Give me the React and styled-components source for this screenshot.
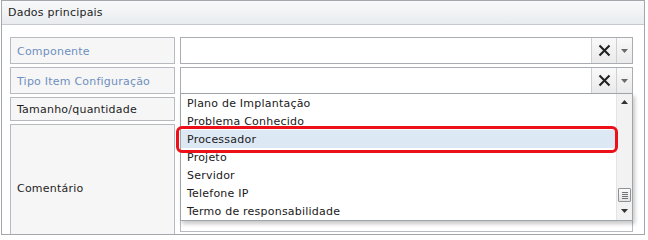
import React from 'react';
import styled, { createGlobalStyle } from 'styled-components';

const GlobalStyle = createGlobalStyle`
  body {
    margin: 0;
    background: #fff;
    font-family: "DejaVu Sans", Verdana, sans-serif;
    letter-spacing: 0.22px;
  }
`;

const Panel = styled.div`
  box-sizing: border-box;
  width: 644px;
  height: 235px;
  margin-left: 1px;
  border: 1px solid #a3a7ac;
  overflow: hidden;
  background: #fff;
`;

const Header = styled.div`
  height: 23px;
  line-height: 24px;
  padding-left: 6px;
  border-bottom: 1px solid #c6cace;
  background: linear-gradient(#f8f9fa, #e9ecef);
  font-size: 11px;
  color: #1e1e1e;
`;

const Body = styled.div`
  padding: 12px 11px 0 8px;
`;

const Form = styled.div`
  display: grid;
  grid-template-columns: 165px 453px;
  grid-template-rows: 27px 27px 24px 128px;
  column-gap: 5px;
  row-gap: 3px;
`;

const Label = styled.div`
  box-sizing: border-box;
  display: flex;
  align-items: center;
  padding: 1px 0 0 6px;
  border: 1px solid #b7bbbf;
  background: #f6f6f6;
  font-size: 11px;
  color: ${p => (p.$hint ? '#6e8fc0' : '#1e1e1e')};
`;

const Combo = styled.div`
  position: relative;
  box-sizing: border-box;
  display: flex;
  border: 1px solid #a9adb2;
  background: #fff;
`;

const Field = styled.div`
  flex: 1;
`;

const SideButton = styled.div`
  width: ${p => p.$w}px;
  display: flex;
  align-items: center;
  justify-content: center;
  border-left: 1px solid #cdd0d3;
  background: linear-gradient(#f9f9f9, #eaeaea);
`;

const Plain = styled.div`
  box-sizing: border-box;
  border: 1px solid #b7bbbf;
  background: #fff;
  height: ${p => p.$h}px;
`;

const List = styled.div`
  position: absolute;
  left: -1px;
  top: 25px;
  z-index: 2;
  box-sizing: border-box;
  width: 453px;
  display: flex;
  border: 1px solid #a0a5aa;
  background: #fff;
  box-shadow: 2px 3px 4px rgba(0, 0, 0, 0.22);
`;

const Items = styled.div`
  flex: 1;
`;

const Item = styled.div`
  height: 17px;
  padding: 1px 0 0 6px;
  line-height: 18px;
  font-size: 11px;
  color: #202020;
  white-space: nowrap;
  background: ${p => (p.$selected ? '#dde8f5' : 'transparent')};
`;

const Scrollbar = styled.div`
  width: 15px;
  display: flex;
  flex-direction: column;
  border-left: 1px solid #e4e4e4;
  background: #f2f2f2;
`;

const ScrollArrow = styled.div`
  height: ${p => p.$h}px;
  display: flex;
  align-items: center;
  justify-content: center;
`;

const Track = styled.div`
  flex: 1;
  display: flex;
  align-items: flex-end;
  justify-content: center;
`;

const Thumb = styled.div`
  box-sizing: border-box;
  width: 13px;
  height: 14px;
  border: 1px solid #8f9296;
  border-radius: 1px;
  background:
    linear-gradient(#6f7378, #6f7378) 3px 3px / 6px 1px no-repeat,
    linear-gradient(#6f7378, #6f7378) 3px 5px / 6px 1px no-repeat,
    linear-gradient(#6f7378, #6f7378) 3px 7px / 6px 1px no-repeat,
    linear-gradient(#6f7378, #6f7378) 3px 9px / 6px 1px no-repeat,
    linear-gradient(#fbfbfb, #e3e3e3);
`;

const Mark = styled.div`
  position: absolute;
  left: -5px;
  top: 32px;
  box-sizing: border-box;
  width: 442px;
  height: 27px;
  border: 3px solid #ec1119;
  border-radius: 6px;
  pointer-events: none;
`;

const ClearIcon = () => (
  <svg width="13" height="13" viewBox="0 0 13 13">
    <path d="M1.5 1.5 L11.5 11.5 M11.5 1.5 L1.5 11.5" stroke="#222" strokeWidth="2.1" />
  </svg>
);

const Caret = ({ up, color = '#6a6a6a' }) => (
  <svg width="7" height="4" viewBox="0 0 7 4">
    <path d={up ? 'M0 4 L7 4 L3.5 0 Z' : 'M0 0 L7 0 L3.5 4 Z'} fill={color} />
  </svg>
);

const items = [
  'Plano de Implantação',
  'Problema Conhecido',
  'Processador',
  'Projeto',
  'Servidor',
  'Telefone IP',
  'Termo de responsabilidade',
];

function ComboBox({ children }) {
  return (
    <Combo>
      <Field />
      <SideButton $w={24}>
        <ClearIcon />
      </SideButton>
      <SideButton $w={15}>
        <Caret />
      </SideButton>
      {children}
    </Combo>
  );
}

export default function App() {
  return (
    <>
      <GlobalStyle />
      <Panel>
        <Header>Dados principais</Header>
        <Body>
          <Form>
            <Label $hint>Componente</Label>
            <ComboBox />
            <Label $hint>Tipo Item Configuração</Label>
            <ComboBox>
              <List>
                <Items>
                  {items.map(name => (
                    <Item key={name} $selected={name === 'Processador'}>
                      {name}
                    </Item>
                  ))}
                </Items>
                <Scrollbar>
                  <ScrollArrow $h={16}>
                    <Caret up color="#333" />
                  </ScrollArrow>
                  <Track>
                    <Thumb />
                  </Track>
                  <ScrollArrow $h={18}>
                    <Caret color="#333" />
                  </ScrollArrow>
                </Scrollbar>
                <Mark />
              </List>
            </ComboBox>
            <Label>Tamanho/quantidade</Label>
            <Plain $h={24} />
            <Label>Comentário</Label>
            <Plain $h={108} />
          </Form>
        </Body>
      </Panel>
    </>
  );
}
